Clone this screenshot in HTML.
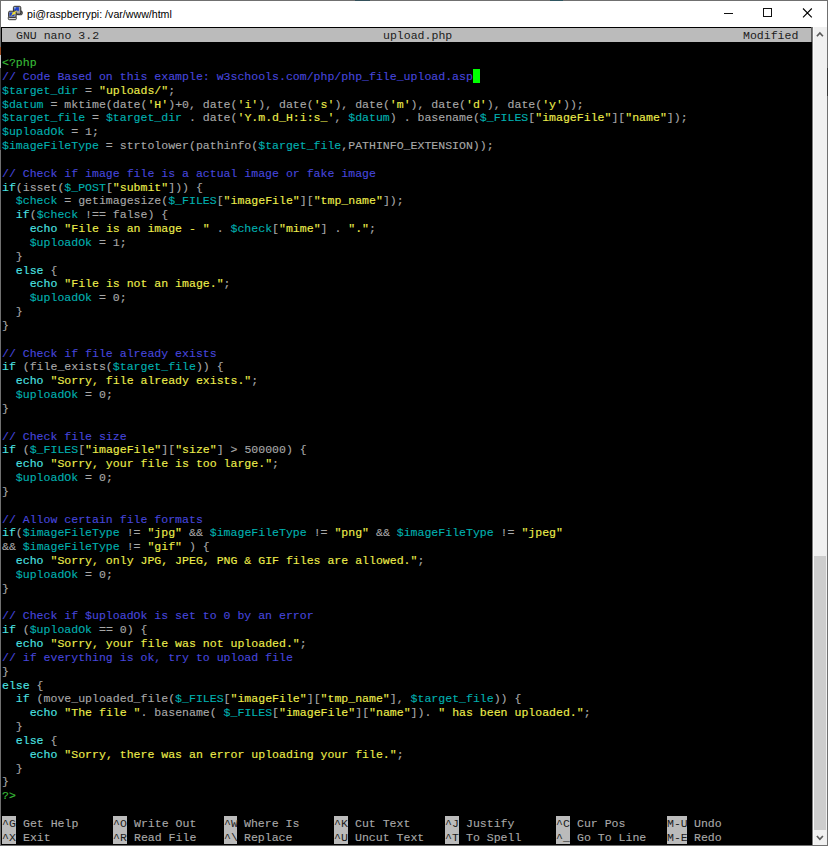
<!DOCTYPE html>
<html><head><meta charset="utf-8">
<style>
html,body{margin:0;padding:0;}
body{width:828px;height:846px;position:relative;overflow:hidden;background:#fff;}
#frame{position:absolute;left:0;top:0;width:826px;height:844px;border:1px solid #707070;background:#fff;}
#term{position:absolute;left:1px;top:27px;width:811px;height:818px;background:#000;}
.r{position:absolute;left:2px;height:13.83px;line-height:13.83px;font-family:"Liberation Mono",monospace;font-size:11.0px;transform:scaleX(1.04895);transform-origin:0 0;white-space:pre;color:#a8a8a8;-webkit-text-stroke:0.12px currentColor;}
.inv{position:absolute;background:#bbbbbb;}
.ib{color:#1c1c1c;-webkit-text-stroke:0;}
.g{color:#38bc38;} .b{color:#4646dc;} .c{color:#00b0b0;} .k{color:#4ce4e4;} .y{color:#eeee4c;}
#title{position:absolute;left:26.5px;top:4.7px;transform:scaleX(0.966);font-family:"Liberation Sans",sans-serif;font-size:11px;line-height:18px;transform-origin:0 0;color:#000;white-space:pre;}
#sb{position:absolute;left:812px;top:27px;width:15px;height:818px;background:#f0f0f0;}
#thumb{position:absolute;left:813.5px;top:555.5px;width:12.5px;height:274.8px;background:#cdcdcd;}
</style></head><body>
<div id="frame"></div>
<div id="term"></div>
<div style="position:absolute;left:827px;top:68px;width:1px;height:28px;background:#383838"></div>
<div style="position:absolute;left:355px;top:0;width:15px;height:1px;background:#34505a"></div>
<div style="position:absolute;left:550px;top:0;width:13px;height:1px;background:#2e5560"></div>
<div style="position:absolute;left:0;top:47px;width:1px;height:8px;background:#9a4a20"></div>
<div style="position:absolute;left:0;top:55px;width:1px;height:13px;background:#c4c4c4"></div>
<div style="position:absolute;left:0;top:68px;width:1px;height:82px;background:#3a3a3a"></div>
<div id="sb"></div>
<div style="position:absolute;left:812px;top:27px;width:1px;height:818px;background:#7c7c7c"></div>
<div style="position:absolute;left:813px;top:27px;width:1px;height:818px;background:#fafafa"></div>
<div id="thumb"></div>
<svg style="position:absolute;left:814px;top:30px" width="12" height="10" viewBox="0 0 12 10"><path d="M2.9 6.3 L5.9 3.0 L8.9 6.3" fill="none" stroke="#5a5a5a" stroke-width="1.7"/></svg>
<svg style="position:absolute;left:814px;top:832px" width="12" height="10" viewBox="0 0 12 10"><path d="M2.9 4.0 L5.9 7.3 L8.9 4.0" fill="none" stroke="#5a5a5a" stroke-width="1.7"/></svg>
<svg style="position:absolute;left:0;top:0" width="30" height="26" viewBox="0 0 30 26">
<path d="M17.5 11 h3.6 a1.2 1.2 0 0 1 1.2 1.2 v1.4 a1.2 1.2 0 0 1 -1.2 1.2 h-3.6z" fill="#6c6c6c" stroke="#2a2a2a" stroke-width="0.8"/>
<rect x="13.4" y="6.3" width="7.4" height="7.8" rx="1.3" fill="#a4a4a4" stroke="#1e1e1e" stroke-width="0.9"/>
<rect x="14.3" y="7.2" width="4.6" height="3.7" fill="#2040c8"/>
<rect x="14.3" y="7.2" width="1.4" height="1.3" fill="#a8d8f4"/>
<rect x="8.3" y="16.7" width="8" height="3" rx="1" fill="#dcdcdc" stroke="#222" stroke-width="0.9"/>
<rect x="8.6" y="11.2" width="7.6" height="6.2" rx="1.2" fill="#a4a4a4" stroke="#1e1e1e" stroke-width="0.9"/>
<rect x="9.5" y="12.4" width="4.8" height="3.9" fill="#2040c8"/>
<path d="M10.2 16.2 L12.6 13.8 L11.9 13.0 L17.6 10.0 L15.0 12.8 L15.8 13.5 Z" fill="#f4e22e"/>
</svg>
<div id="title">pi@raspberrypi: /var/www/html</div>
<svg style="position:absolute;left:715px;top:3px" width="110" height="22" viewBox="0 0 110 22">
<path d="M9 10.5 H18" stroke="#111" stroke-width="1"/>
<rect x="48.5" y="5.5" width="8" height="8" fill="none" stroke="#111" stroke-width="1"/>
<path d="M88 5.5 L96.8 14.3 M96.8 5.5 L88 14.3" stroke="#000" stroke-width="1.1"/>
</svg>
<div class="inv" style="left:2px;top:28px;width:809px;height:13.83px"></div>
<div style="position:absolute;left:811px;top:27px;width:1px;height:15px;background:#5c5c5c"></div>
<div class="r ib" style="top:29.50px;left:15.85px">GNU nano 3.2</div>
<div class="r ib" style="top:29.50px;left:382.77px">upload.php</div>
<div class="r ib" style="top:29.50px;left:742.77px">Modified</div>
<div class="r" style="top:57.16px"><span class="g">&lt;?php</span></div>
<div class="r" style="top:70.99px"><span class="b">// Code Based on this example: w3schools.com/php/php_file_upload.asp</span></div>
<div class="r" style="top:84.82px"><span class="c">$target_dir</span> = <span class="y">&quot;uploads/&quot;</span>;</div>
<div class="r" style="top:98.65px"><span class="c">$datum</span> = mktime(date(<span class="y">&#x27;H&#x27;</span>)+0, date(<span class="y">&#x27;i&#x27;</span>), date(<span class="y">&#x27;s&#x27;</span>), date(<span class="y">&#x27;m&#x27;</span>), date(<span class="y">&#x27;d&#x27;</span>), date(<span class="y">&#x27;y&#x27;</span>));</div>
<div class="r" style="top:112.48px"><span class="c">$target_file</span> = <span class="c">$target_dir</span> . date(<span class="y">&#x27;Y.m.d_H:i:s_&#x27;</span>, <span class="c">$datum</span>) . basename(<span class="c">$_FILES</span>[<span class="y">&quot;imageFile&quot;</span>][<span class="y">&quot;name&quot;</span>]);</div>
<div class="r" style="top:126.31px"><span class="c">$uploadOk</span> = 1;</div>
<div class="r" style="top:140.14px"><span class="c">$imageFileType</span> = strtolower(pathinfo(<span class="c">$target_file</span>,PATHINFO_EXTENSION));</div>
<div class="r" style="top:167.81px"><span class="b">// Check if image file is a actual image or fake image</span></div>
<div class="r" style="top:181.64px"><span class="k">if</span>(isset(<span class="c">$_POST</span>[<span class="y">&quot;submit&quot;</span>])) {</div>
<div class="r" style="top:195.47px">  <span class="c">$check</span> = getimagesize(<span class="c">$_FILES</span>[<span class="y">&quot;imageFile&quot;</span>][<span class="y">&quot;tmp_name&quot;</span>]);</div>
<div class="r" style="top:209.30px">  <span class="k">if</span>(<span class="c">$check</span> !== false) {</div>
<div class="r" style="top:223.13px">    <span class="k">echo</span> <span class="y">&quot;File is an image - &quot;</span> . <span class="c">$check</span>[<span class="y">&quot;mime&quot;</span>] . <span class="y">&quot;.&quot;</span>;</div>
<div class="r" style="top:236.96px">    <span class="c">$uploadOk</span> = 1;</div>
<div class="r" style="top:250.79px">  }</div>
<div class="r" style="top:264.62px">  <span class="k">else</span> {</div>
<div class="r" style="top:278.45px">    <span class="k">echo</span> <span class="y">&quot;File is not an image.&quot;</span>;</div>
<div class="r" style="top:292.28px">    <span class="c">$uploadOk</span> = 0;</div>
<div class="r" style="top:306.11px">  }</div>
<div class="r" style="top:319.94px">}</div>
<div class="r" style="top:347.60px"><span class="b">// Check if file already exists</span></div>
<div class="r" style="top:361.43px"><span class="k">if</span> (file_exists(<span class="c">$target_file</span>)) {</div>
<div class="r" style="top:375.26px">  <span class="k">echo</span> <span class="y">&quot;Sorry, file already exists.&quot;</span>;</div>
<div class="r" style="top:389.09px">  <span class="c">$uploadOk</span> = 0;</div>
<div class="r" style="top:402.92px">}</div>
<div class="r" style="top:430.58px"><span class="b">// Check file size</span></div>
<div class="r" style="top:444.42px"><span class="k">if</span> (<span class="c">$_FILES</span>[<span class="y">&quot;imageFile&quot;</span>][<span class="y">&quot;size&quot;</span>] &gt; 500000) {</div>
<div class="r" style="top:458.25px">  <span class="k">echo</span> <span class="y">&quot;Sorry, your file is too large.&quot;</span>;</div>
<div class="r" style="top:472.08px">  <span class="c">$uploadOk</span> = 0;</div>
<div class="r" style="top:485.91px">}</div>
<div class="r" style="top:513.57px"><span class="b">// Allow certain file formats</span></div>
<div class="r" style="top:527.40px"><span class="k">if</span>(<span class="c">$imageFileType</span> != <span class="y">&quot;jpg&quot;</span> &amp;&amp; <span class="c">$imageFileType</span> != <span class="y">&quot;png&quot;</span> &amp;&amp; <span class="c">$imageFileType</span> != <span class="y">&quot;jpeg&quot;</span></div>
<div class="r" style="top:541.23px">&amp;&amp; <span class="c">$imageFileType</span> != <span class="y">&quot;gif&quot;</span> ) {</div>
<div class="r" style="top:555.06px">  <span class="k">echo</span> <span class="y">&quot;Sorry, only JPG, JPEG, PNG &amp; GIF files are allowed.&quot;</span>;</div>
<div class="r" style="top:568.89px">  <span class="c">$uploadOk</span> = 0;</div>
<div class="r" style="top:582.72px">}</div>
<div class="r" style="top:610.38px"><span class="b">// Check if $uploadOk is set to 0 by an error</span></div>
<div class="r" style="top:624.21px"><span class="k">if</span> (<span class="c">$uploadOk</span> == 0) {</div>
<div class="r" style="top:638.04px">  <span class="k">echo</span> <span class="y">&quot;Sorry, your file was not uploaded.&quot;</span>;</div>
<div class="r" style="top:651.87px"><span class="b">// if everything is ok, try to upload file</span></div>
<div class="r" style="top:665.70px">}</div>
<div class="r" style="top:679.53px"><span class="k">else</span> {</div>
<div class="r" style="top:693.36px">  <span class="k">if</span> (move_uploaded_file(<span class="c">$_FILES</span>[<span class="y">&quot;imageFile&quot;</span>][<span class="y">&quot;tmp_name&quot;</span>], <span class="c">$target_file</span>)) {</div>
<div class="r" style="top:707.19px">    <span class="k">echo</span> <span class="y">&quot;The file &quot;</span>. basename( <span class="c">$_FILES</span>[<span class="y">&quot;imageFile&quot;</span>][<span class="y">&quot;name&quot;</span>]). <span class="y">&quot; has been uploaded.&quot;</span>;</div>
<div class="r" style="top:721.03px">  }</div>
<div class="r" style="top:734.86px">  <span class="k">else</span> {</div>
<div class="r" style="top:748.69px">    <span class="k">echo</span> <span class="y">&quot;Sorry, there was an error uploading your file.&quot;</span>;</div>
<div class="r" style="top:762.52px">  }</div>
<div class="r" style="top:776.35px">}</div>
<div class="r" style="top:790.18px"><span class="g">?&gt;</span></div>
<div style="position:absolute;left:472.77px;top:69.49px;width:6.92px;height:13.83px;background:#00ff00"></div>
<div class="inv" style="left:2.00px;top:816.34px;width:13.85px;height:13.83px"></div>
<div class="r ib" style="top:817.84px;left:2.00px">^G</div>
<div class="r" style="top:817.84px;left:22.77px">Get Help</div>
<div class="inv" style="left:112.77px;top:816.34px;width:13.85px;height:13.83px"></div>
<div class="r ib" style="top:817.84px;left:112.77px">^O</div>
<div class="r" style="top:817.84px;left:133.54px">Write Out</div>
<div class="inv" style="left:223.54px;top:816.34px;width:13.85px;height:13.83px"></div>
<div class="r ib" style="top:817.84px;left:223.54px">^W</div>
<div class="r" style="top:817.84px;left:244.31px">Where Is</div>
<div class="inv" style="left:334.31px;top:816.34px;width:13.85px;height:13.83px"></div>
<div class="r ib" style="top:817.84px;left:334.31px">^K</div>
<div class="r" style="top:817.84px;left:355.08px">Cut Text</div>
<div class="inv" style="left:445.08px;top:816.34px;width:13.85px;height:13.83px"></div>
<div class="r ib" style="top:817.84px;left:445.08px">^J</div>
<div class="r" style="top:817.84px;left:465.85px">Justify</div>
<div class="inv" style="left:555.85px;top:816.34px;width:13.85px;height:13.83px"></div>
<div class="r ib" style="top:817.84px;left:555.85px">^C</div>
<div class="r" style="top:817.84px;left:576.62px">Cur Pos</div>
<div class="inv" style="left:666.62px;top:816.34px;width:20.77px;height:13.83px"></div>
<div class="r ib" style="top:817.84px;left:666.62px">M-U</div>
<div class="r" style="top:817.84px;left:694.31px">Undo</div>
<div class="inv" style="left:2.00px;top:830.17px;width:13.85px;height:13.83px"></div>
<div class="r ib" style="top:831.67px;left:2.00px">^X</div>
<div class="r" style="top:831.67px;left:22.77px">Exit</div>
<div class="inv" style="left:112.77px;top:830.17px;width:13.85px;height:13.83px"></div>
<div class="r ib" style="top:831.67px;left:112.77px">^R</div>
<div class="r" style="top:831.67px;left:133.54px">Read File</div>
<div class="inv" style="left:223.54px;top:830.17px;width:13.85px;height:13.83px"></div>
<div class="r ib" style="top:831.67px;left:223.54px">^\</div>
<div class="r" style="top:831.67px;left:244.31px">Replace</div>
<div class="inv" style="left:334.31px;top:830.17px;width:13.85px;height:13.83px"></div>
<div class="r ib" style="top:831.67px;left:334.31px">^U</div>
<div class="r" style="top:831.67px;left:355.08px">Uncut Text</div>
<div class="inv" style="left:445.08px;top:830.17px;width:13.85px;height:13.83px"></div>
<div class="r ib" style="top:831.67px;left:445.08px">^T</div>
<div class="r" style="top:831.67px;left:465.85px">To Spell</div>
<div class="inv" style="left:555.85px;top:830.17px;width:13.85px;height:13.83px"></div>
<div class="r ib" style="top:831.67px;left:555.85px">^_</div>
<div class="r" style="top:831.67px;left:576.62px">Go To Line</div>
<div class="inv" style="left:666.62px;top:830.17px;width:20.77px;height:13.83px"></div>
<div class="r ib" style="top:831.67px;left:666.62px">M-E</div>
<div class="r" style="top:831.67px;left:694.31px">Redo</div>
</body></html>
